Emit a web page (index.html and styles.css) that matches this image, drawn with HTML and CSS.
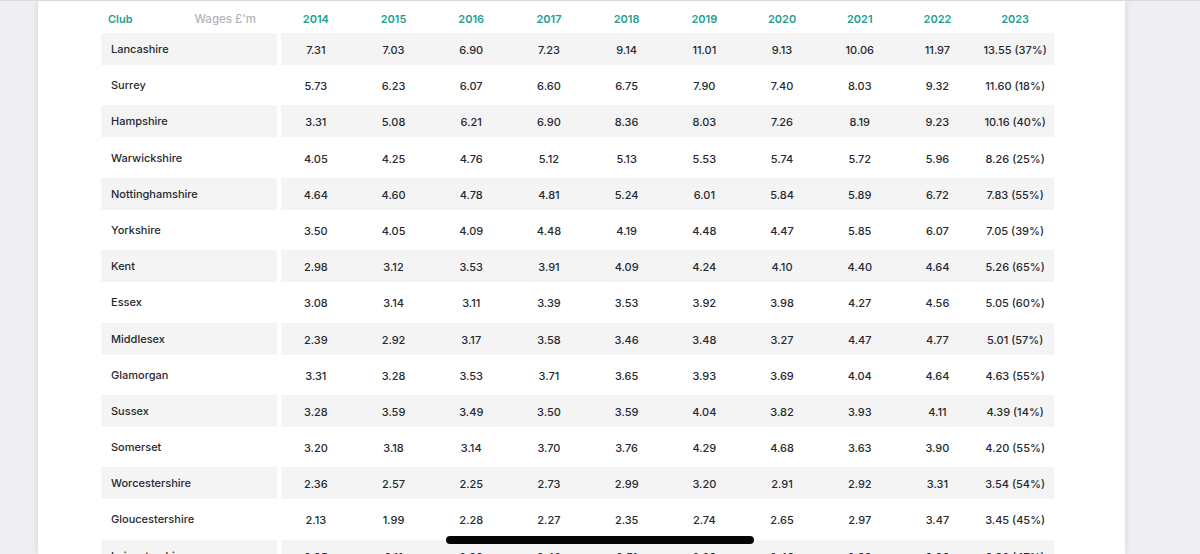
FILE: index.html
```html
<!DOCTYPE html>
<html lang="en">
<head>
<meta charset="utf-8">
<title>County wages</title>
<link rel="stylesheet" href="styles.css">
</head>
<body>
<div class="screen">
  <div class="gutter gutter-left"></div>
  <main class="sheet">
    <div class="wages">
      <div class="row head">
        <div class="club-head"><span class="club-label">Club</span><span class="unit">Wages £'m</span></div>
        <div class="yr">2014</div><div class="yr">2015</div><div class="yr">2016</div><div class="yr">2017</div><div class="yr">2018</div>
        <div class="yr">2019</div><div class="yr">2020</div><div class="yr">2021</div><div class="yr">2022</div><div class="yr">2023</div>
      </div>
      <div class="body">
        <div class="row alt"><div class="club">Lancashire</div><div class="num">7.31</div><div class="num">7.03</div><div class="num">6.90</div><div class="num">7.23</div><div class="num">9.14</div><div class="num">11.01</div><div class="num">9.13</div><div class="num">10.06</div><div class="num">11.97</div><div class="num">13.55 (37%)</div></div>
        <div class="row"><div class="club">Surrey</div><div class="num">5.73</div><div class="num">6.23</div><div class="num">6.07</div><div class="num">6.60</div><div class="num">6.75</div><div class="num">7.90</div><div class="num">7.40</div><div class="num">8.03</div><div class="num">9.32</div><div class="num">11.60 (18%)</div></div>
        <div class="row alt"><div class="club">Hampshire</div><div class="num">3.31</div><div class="num">5.08</div><div class="num">6.21</div><div class="num">6.90</div><div class="num">8.36</div><div class="num">8.03</div><div class="num">7.26</div><div class="num">8.19</div><div class="num">9.23</div><div class="num">10.16 (40%)</div></div>
        <div class="row"><div class="club">Warwickshire</div><div class="num">4.05</div><div class="num">4.25</div><div class="num">4.76</div><div class="num">5.12</div><div class="num">5.13</div><div class="num">5.53</div><div class="num">5.74</div><div class="num">5.72</div><div class="num">5.96</div><div class="num">8.26 (25%)</div></div>
        <div class="row alt"><div class="club">Nottinghamshire</div><div class="num">4.64</div><div class="num">4.60</div><div class="num">4.78</div><div class="num">4.81</div><div class="num">5.24</div><div class="num">6.01</div><div class="num">5.84</div><div class="num">5.89</div><div class="num">6.72</div><div class="num">7.83 (55%)</div></div>
        <div class="row"><div class="club">Yorkshire</div><div class="num">3.50</div><div class="num">4.05</div><div class="num">4.09</div><div class="num">4.48</div><div class="num">4.19</div><div class="num">4.48</div><div class="num">4.47</div><div class="num">5.85</div><div class="num">6.07</div><div class="num">7.05 (39%)</div></div>
        <div class="row alt"><div class="club">Kent</div><div class="num">2.98</div><div class="num">3.12</div><div class="num">3.53</div><div class="num">3.91</div><div class="num">4.09</div><div class="num">4.24</div><div class="num">4.10</div><div class="num">4.40</div><div class="num">4.64</div><div class="num">5.26 (65%)</div></div>
        <div class="row"><div class="club">Essex</div><div class="num">3.08</div><div class="num">3.14</div><div class="num">3.11</div><div class="num">3.39</div><div class="num">3.53</div><div class="num">3.92</div><div class="num">3.98</div><div class="num">4.27</div><div class="num">4.56</div><div class="num">5.05 (60%)</div></div>
        <div class="row alt"><div class="club">Middlesex</div><div class="num">2.39</div><div class="num">2.92</div><div class="num">3.17</div><div class="num">3.58</div><div class="num">3.46</div><div class="num">3.48</div><div class="num">3.27</div><div class="num">4.47</div><div class="num">4.77</div><div class="num">5.01 (57%)</div></div>
        <div class="row"><div class="club">Glamorgan</div><div class="num">3.31</div><div class="num">3.28</div><div class="num">3.53</div><div class="num">3.71</div><div class="num">3.65</div><div class="num">3.93</div><div class="num">3.69</div><div class="num">4.04</div><div class="num">4.64</div><div class="num">4.63 (55%)</div></div>
        <div class="row alt"><div class="club">Sussex</div><div class="num">3.28</div><div class="num">3.59</div><div class="num">3.49</div><div class="num">3.50</div><div class="num">3.59</div><div class="num">4.04</div><div class="num">3.82</div><div class="num">3.93</div><div class="num">4.11</div><div class="num">4.39 (14%)</div></div>
        <div class="row"><div class="club">Somerset</div><div class="num">3.20</div><div class="num">3.18</div><div class="num">3.14</div><div class="num">3.70</div><div class="num">3.76</div><div class="num">4.29</div><div class="num">4.68</div><div class="num">3.63</div><div class="num">3.90</div><div class="num">4.20 (55%)</div></div>
        <div class="row alt"><div class="club">Worcestershire</div><div class="num">2.36</div><div class="num">2.57</div><div class="num">2.25</div><div class="num">2.73</div><div class="num">2.99</div><div class="num">3.20</div><div class="num">2.91</div><div class="num">2.92</div><div class="num">3.31</div><div class="num">3.54 (54%)</div></div>
        <div class="row"><div class="club">Gloucestershire</div><div class="num">2.13</div><div class="num">1.99</div><div class="num">2.28</div><div class="num">2.27</div><div class="num">2.35</div><div class="num">2.74</div><div class="num">2.65</div><div class="num">2.97</div><div class="num">3.47</div><div class="num">3.45 (45%)</div></div>
        <div class="row alt"><div class="club">Leicestershire</div><div class="num">2.05</div><div class="num">2.11</div><div class="num">2.30</div><div class="num">2.42</div><div class="num">2.51</div><div class="num">2.60</div><div class="num">2.48</div><div class="num">2.80</div><div class="num">2.96</div><div class="num">3.02 (47%)</div></div>
      </div>
    </div>
  </main>
  <div class="gutter gutter-right"></div>
  <div class="home-indicator"></div>
</div>
</body>
</html>
```

FILE: styles.css
```css
* { box-sizing: border-box; }
html, body {
  margin: 0;
  padding: 0;
  height: 100%;
  overflow: hidden;
}
body {
  background: #f0f0f4;
  font-family: Inter, "Noto Sans", "Liberation Sans", sans-serif;
  color: #262930;
}
.screen {
  position: relative;
  display: flex;
  width: 1200px;
  height: 554px;
  border-top: 1px solid #d9d9dd;
  overflow: hidden;
}
.gutter {
  background: #efeff3;
}
.gutter-left { width: 38px; flex: none; }
.gutter-right { flex: 1; }
.sheet {
  width: 1087px;
  flex: none;
  background: #ffffff;
  box-shadow: 0 0 6px rgba(0, 0, 0, 0.13);
  padding-left: 63px;
  position: relative;
  z-index: 1;
}
.wages {
  width: 953px;
}
.row {
  display: grid;
  grid-template-columns: 176px repeat(10, 1fr);
  height: 32px;
  align-items: stretch;
}
.head {
  height: 32px;
  padding-top: 4px;
}
.club-head {
  display: flex;
  align-items: center;
  justify-content: space-between;
  padding-left: 7px;
  padding-right: 21px;
  font-size: 11px;
}
.club-label {
  color: #1e9f8f;
  font-weight: 600;
}
.unit {
  color: #b3b3b8;
  font-weight: 500;
  font-size: 11.5px;
}
.yr {
  display: flex;
  align-items: center;
  justify-content: center;
  color: #1e9f8f;
  font-weight: 600;
  font-size: 11px;
}
.body {
  display: flex;
  flex-direction: column;
  gap: 4.2px;
}
.club {
  display: flex;
  align-items: center;
  padding-left: 10px;
  font-size: 11px;
  font-weight: 500;
}
.num {
  display: flex;
  align-items: center;
  justify-content: center;
  padding-top: 2px;
  font-size: 11px;
  font-weight: 500;
}
.alt .club,
.alt .num {
  background: #f4f4f5;
}
.alt .num:nth-child(2) {
  box-shadow: inset 4px 0 0 #ffffff;
}
.home-indicator {
  position: absolute;
  left: 446px;
  top: 535px;
  width: 308px;
  height: 8px;
  border-radius: 4px;
  background: #050505;
  z-index: 5;
}
```
